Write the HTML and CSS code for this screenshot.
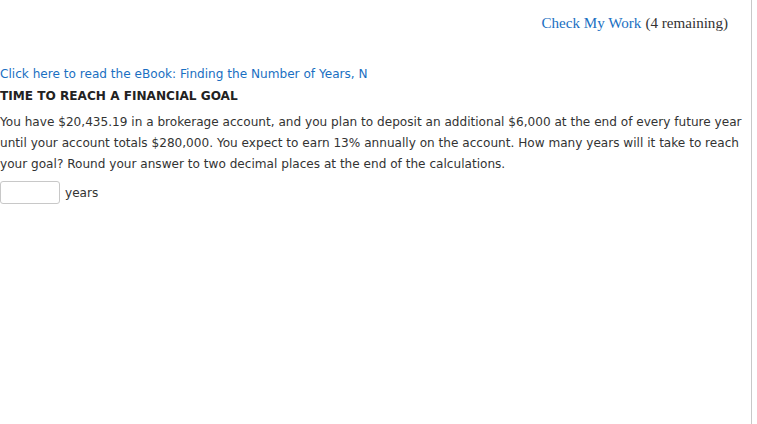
FILE: index.html
```html
<!DOCTYPE html>
<html>
<head>
<meta charset="utf-8">
<link rel="stylesheet" href="styles.css">
</head>
<body>
<div class="page">
  <div class="topbar">
    <a class="check" href="#">Check My Work</a> <span class="remain">(4 remaining)</span>
  </div>
  <div class="question">
    <a class="ebook" href="#">Click here to read the eBook: Finding the Number of Years, N</a>
    <div class="title">TIME TO REACH A FINANCIAL GOAL</div>
    <p class="text">You have $20,435.19 in a brokerage account, and you plan to deposit an additional $6,000 at the end of every future year until your account totals $280,000. You expect to earn 13% annually on the account. How many years will it take to reach your goal? Round your answer to two decimal places at the end of the calculations.</p>
    <div class="answer">
      <input class="field" type="text">
      <span class="unit">years</span>
    </div>
  </div>
</div>
</body>
</html>
```
FILE: styles.css
```css
html, body {
  margin: 0;
  padding: 0;
  background: #fff;
}
.page {
  width: 752px;
  height: 424px;
  border-right: 1px solid #c8c8c8;
  box-sizing: border-box;
}
.topbar {
  display: flex;
  justify-content: flex-end;
  align-items: baseline;
  gap: 4px;
  padding: 15px 23px 0 0;
  height: 52px;
  box-sizing: border-box;
  font-family: "Liberation Serif", serif;
  font-size: 15.1px;
}
.check {
  color: #1a6fc2;
  text-decoration: none;
}
.remain {
  color: #333;
}
.question {
  font-family: "DejaVu Sans", Verdana, sans-serif;
  font-size: 12.1px;
  color: #333;
  padding-top: 11px;
}
.ebook {
  display: block;
  color: #1a6fc2;
  text-decoration: none;
  line-height: 22px;
}
.title {
  font-weight: bold;
  line-height: 22px;
  color: #222;
}
.text {
  margin: 5px 0 0;
  line-height: 21px;
  width: 748px;
}
.answer {
  display: flex;
  align-items: center;
  gap: 5px;
  margin-top: 6px;
}
.field {
  width: 60px;
  height: 23px;
  box-sizing: border-box;
  border: 1px solid #c8c8c8;
  border-radius: 3px;
  margin: 0;
  padding: 0;
}
.unit {
  color: #333;
}
```
